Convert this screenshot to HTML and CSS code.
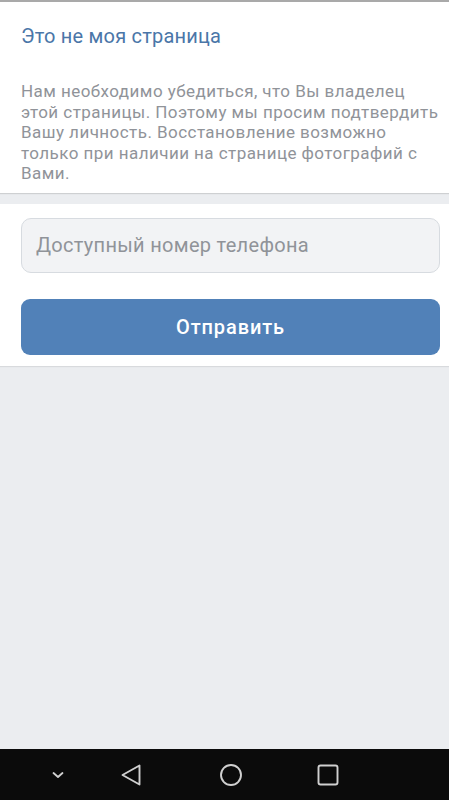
FILE: index.html
```html
<!DOCTYPE html>
<html lang="ru">
<head>
<meta charset="utf-8">
<title>Восстановление доступа</title>
<link rel="stylesheet" href="styles.css">
</head>
<body>
<div class="screen">
  <section class="card card-info">
    <a class="link" href="#">Это не моя страница</a>
    <p class="note">Нам необходимо убедиться, что Вы владелец этой страницы. Поэтому мы просим подтвердить Вашу личность. Восстановление возможно только при наличии на странице фотографий с Вами.</p>
  </section>
  <section class="card card-form">
    <input class="field" type="text" placeholder="Доступный номер телефона">
    <button class="btn" type="button">Отправить</button>
  </section>
  <div class="fill"></div>
  <nav class="navbar">
    <svg class="nav-icon" width="24" height="24" viewBox="0 0 24 24"><path d="M7.5 10 L12 14 L16.5 10" fill="none" stroke="#d0d0d0" stroke-width="1.8" stroke-linecap="round" stroke-linejoin="round"/></svg>
    <svg class="nav-icon" width="24" height="24" viewBox="0 0 24 24"><path d="M20.5 2.5 L20.5 21.5 L3.5 12 Z" fill="none" stroke="#d0d0d0" stroke-width="1.9" stroke-linejoin="round"/></svg>
    <svg class="nav-icon" width="24" height="24" viewBox="0 0 24 24"><circle cx="12" cy="12" r="10" fill="none" stroke="#d0d0d0" stroke-width="1.9"/></svg>
    <svg class="nav-icon" width="24" height="24" viewBox="0 0 24 24"><rect x="2.5" y="2.5" width="19" height="19" rx="2" fill="none" stroke="#d0d0d0" stroke-width="1.9"/></svg>
  </nav>
</div>
</body>
</html>
```
FILE: styles.css
```css
* { box-sizing: border-box; }
html, body { margin: 0; padding: 0; }
body {
  font-family: Roboto, "Noto Sans", "Liberation Sans", sans-serif;
  background: #ebedf0;
}
.screen {
  height: 800px;
  display: flex;
  flex-direction: column;
}
.card {
  background: #ffffff;
  padding: 0 9px 0 21px;
}
.card-info {
  border-top: 2px solid #a9a9a9;
  padding-top: 22px;
  padding-bottom: 9px;
  padding-right: 7px;
  box-shadow: 0 1px 1px rgba(0,0,0,0.12);
}
.link {
  display: block;
  color: #4a76a8;
  font-size: 20px;
  letter-spacing: 0.2px;
  line-height: 24px;
  text-decoration: none;
}
.note {
  margin: 33px 0 0;
  color: #909399;
  font-size: 17px;
  letter-spacing: 0.45px;
  line-height: 20.6px;
}
.card-form {
  margin-top: 11px;
  padding: 14px 9px 11px 21px;
  display: flex;
  flex-direction: column;
  gap: 26px;
  box-shadow: 0 1px 1px rgba(0,0,0,0.08);
}
.field {
  height: 55px;
  border: 1px solid #d7dbe0;
  border-radius: 10px;
  background: #f2f3f5;
  padding: 0 14px;
  font-family: inherit;
  font-size: 20px;
  letter-spacing: 0.3px;
  color: #000;
  outline: none;
}
.field::placeholder { color: #909399; }
.btn {
  height: 56px;
  border: 0;
  border-radius: 9px;
  background: #5181b8;
  color: #ffffff;
  font-family: inherit;
  font-size: 20px;
  font-weight: 500;
  letter-spacing: 0.9px;
}
.fill { flex: 1; }
.navbar {
  height: 51px;
  background: #0b0b0b;
  display: flex;
  align-items: center;
  padding-left: 46px;
}
.nav-icon:nth-child(1) { margin-right: 49px; }
.nav-icon:nth-child(2) { margin-right: 76px; }
.nav-icon:nth-child(3) { margin-right: 73px; }
```
